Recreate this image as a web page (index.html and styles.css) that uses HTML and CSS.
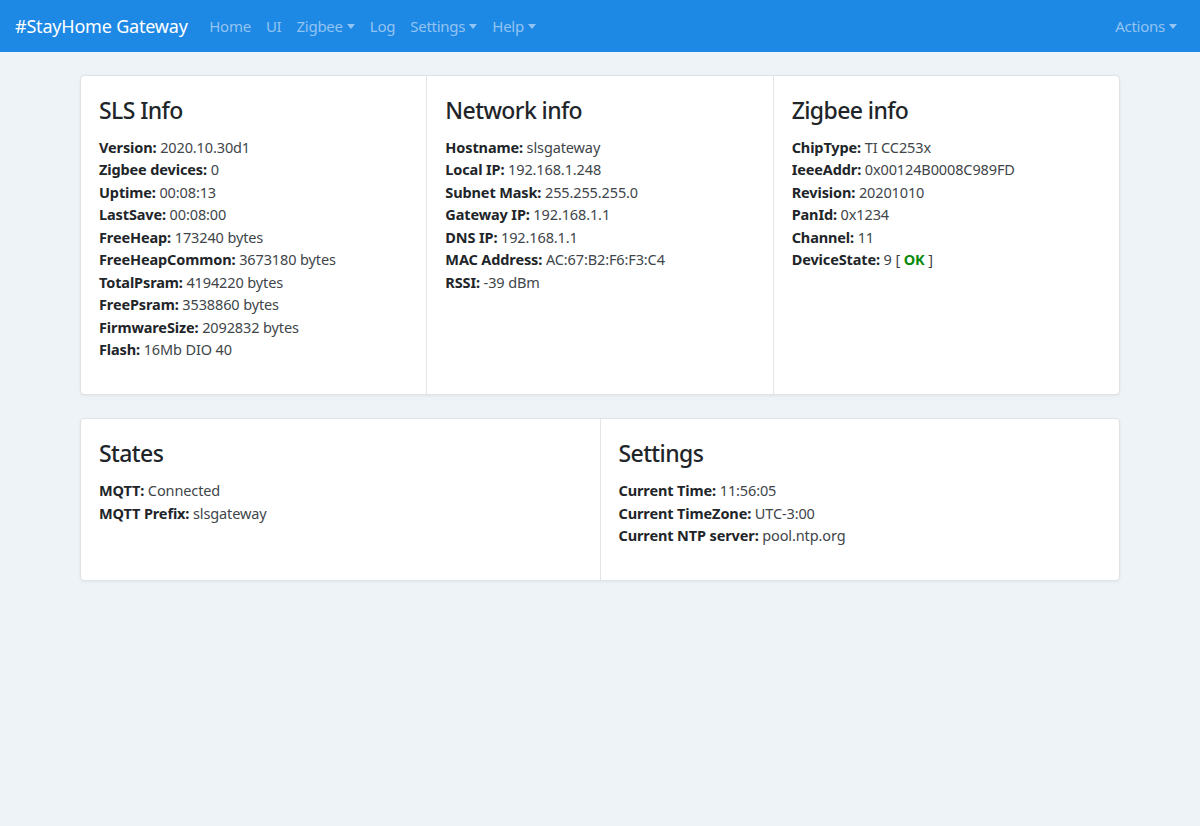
FILE: index.html
```html
<!DOCTYPE html>
<html>
<head>
<meta charset="utf-8">
<title>#StayHome Gateway</title>
<link rel="stylesheet" href="styles.css">
</head>
<body>
<nav class="navbar">
  <a class="brand">#StayHome Gateway</a>
  <ul class="nav">
    <li><a>Home</a></li>
    <li><a>UI</a></li>
    <li><a class="dd">Zigbee</a></li>
    <li><a>Log</a></li>
    <li><a class="dd">Settings</a></li>
    <li><a class="dd">Help</a></li>
  </ul>
  <ul class="nav nav-right">
    <li><a class="dd">Actions</a></li>
  </ul>
</nav>
<main class="container">
  <div class="card-group">
    <div class="card">
      <h3>SLS Info</h3>
      <div class="lines">
        <div><b>Version:</b> 2020.10.30d1</div>
        <div><b>Zigbee devices:</b> 0</div>
        <div><b>Uptime:</b> 00:08:13</div>
        <div><b>LastSave:</b> 00:08:00</div>
        <div><b>FreeHeap:</b> 173240 bytes</div>
        <div><b>FreeHeapCommon:</b> 3673180 bytes</div>
        <div><b>TotalPsram:</b> 4194220 bytes</div>
        <div><b>FreePsram:</b> 3538860 bytes</div>
        <div><b>FirmwareSize:</b> 2092832 bytes</div>
        <div><b>Flash:</b> 16Mb DIO 40</div>
      </div>
    </div>
    <div class="card">
      <h3>Network info</h3>
      <div class="lines">
        <div><b>Hostname:</b> slsgateway</div>
        <div><b>Local IP:</b> 192.168.1.248</div>
        <div><b>Subnet Mask:</b> 255.255.255.0</div>
        <div><b>Gateway IP:</b> 192.168.1.1</div>
        <div><b>DNS IP:</b> 192.168.1.1</div>
        <div><b>MAC Address:</b> AC:67:B2:F6:F3:C4</div>
        <div><b>RSSI:</b> -39 dBm</div>
      </div>
    </div>
    <div class="card">
      <h3>Zigbee info</h3>
      <div class="lines">
        <div><b>ChipType:</b> TI CC253x</div>
        <div><b>IeeeAddr:</b> 0x00124B0008C989FD</div>
        <div><b>Revision:</b> 20201010</div>
        <div><b>PanId:</b> 0x1234</div>
        <div><b>Channel:</b> 11</div>
        <div><b>DeviceState:</b> 9 [ <b class="ok">OK</b> ]</div>
      </div>
    </div>
  </div>
  <div class="card-group">
    <div class="card">
      <h3>States</h3>
      <div class="lines">
        <div><b>MQTT:</b> Connected</div>
        <div><b>MQTT Prefix:</b> slsgateway</div>
      </div>
    </div>
    <div class="card">
      <h3>Settings</h3>
      <div class="lines">
        <div><b>Current Time:</b> 11:56:05</div>
        <div><b>Current TimeZone:</b> UTC-3:00</div>
        <div><b>Current NTP server:</b> pool.ntp.org</div>
      </div>
    </div>
  </div>
</main>
</body>
</html>
```

FILE: styles.css
```css
* { box-sizing: border-box; }
html, body {
  margin: 0;
  padding: 0;
}
body {
  background: #edf3f7;
  font-family: "Noto Sans", "Open Sans", "Liberation Sans", sans-serif;
  font-size: 14.5px;
  line-height: 22.5px;
  letter-spacing: -0.12px;
  color: #212529;
  min-height: 826px;
}
.navbar {
  height: 52px;
  background: #1e88e5;
  display: flex;
  align-items: center;
  padding: 0 15px;
}
.brand {
  color: #fff;
  font-size: 18px;
  letter-spacing: -0.2px;
  margin-right: 14px;
  white-space: nowrap;
}
.nav {
  list-style: none;
  margin: 0;
  padding: 0;
  display: flex;
}
.nav a {
  display: block;
  padding: 0 7.5px;
  color: #93c4f1;
  font-size: 15px;
  letter-spacing: -0.25px;
}
.nav-right { margin-left: auto; }
.nav-right a { padding-right: 8px; }
.dd::after {
  content: "";
  display: inline-block;
  margin-left: 4px;
  vertical-align: 3px;
  border-top: 5px solid #93c4f1;
  border-left: 4.5px solid transparent;
  border-right: 4.5px solid transparent;
}
.container {
  width: 1040px;
  margin: 23px auto 0;
}
.card-group {
  display: flex;
  background: #fff;
  border: 1px solid #dee3e7;
  border-radius: 4px;
  box-shadow: 0 1px 3px rgba(0, 0, 0, 0.06);
  margin-bottom: 23px;
}
.card {
  flex: 1 1 0;
  padding: 19.5px 18px 33.5px;
  border-left: 1px solid #e1e5e8;
}
.card:first-child { border-left: none; }
h3 {
  margin: 0 0 11.5px;
  font-size: 23px;
  line-height: 28.8px;
  letter-spacing: -0.6px;
  font-weight: 500;
  color: #212529;
}
.lines { color: #40454a; }
.lines b { color: #212529; font-weight: 700; }
.lines b.ok { color: #0a8a0a; }
```
